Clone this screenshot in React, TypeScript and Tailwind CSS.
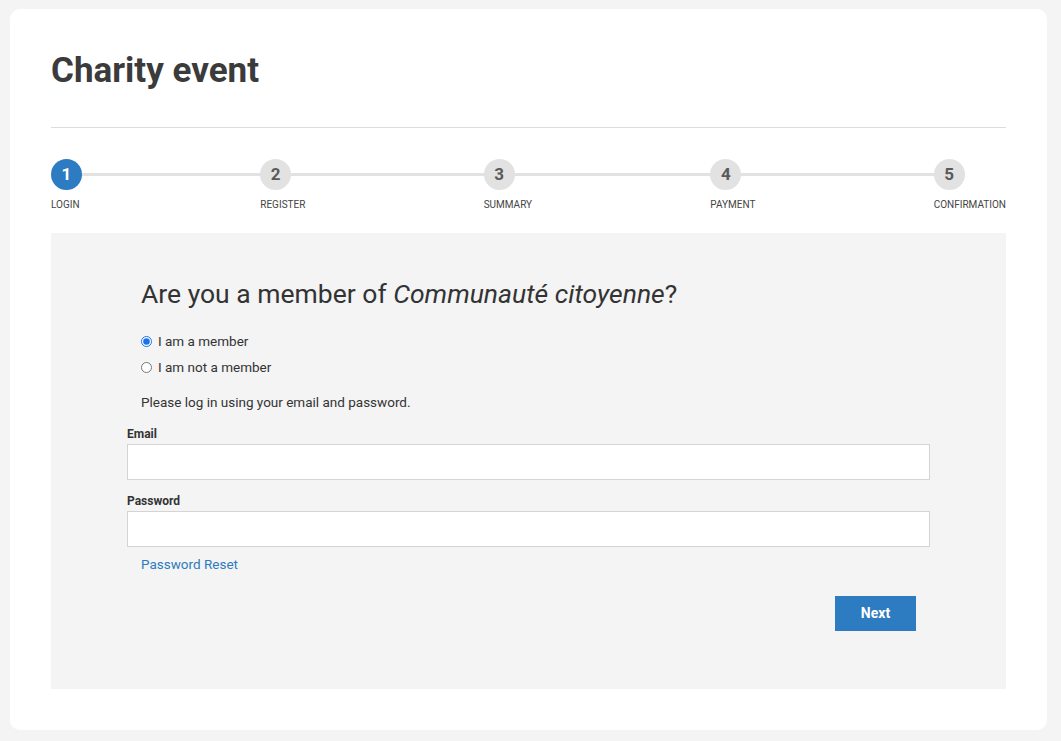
import React from "react";

const steps = [
  { n: 1, label: "Login", active: true },
  { n: 2, label: "Register" },
  { n: 3, label: "Summary" },
  { n: 4, label: "Payment" },
  { n: 5, label: "Confirmation" },
];

export default function App() {
  return (
    <div
      className="min-h-screen bg-[#f4f4f4] pt-[9px] pl-[10px] pr-[14px] pb-[11px]"
      style={{ fontFamily: "Roboto, 'Liberation Sans', sans-serif" }}
    >
      <div className="bg-white rounded-[10px] px-[41px] pt-[41px] pb-[41px]">
        <h1 className="text-[35px] leading-[42px] font-bold text-[#3b3b3b]">Charity event</h1>
        <div className="mt-[35px] border-t border-[#dddddd]" />

        <div className="relative mt-[31px] flex justify-between">
          <div className="absolute left-[15px] right-[59px] top-[14px] h-[3px] bg-[#e2e2e2]" />
          {steps.map((s) => (
            <div key={s.n} className="relative flex flex-col items-start">
              <div
                className={
                  s.active
                    ? "w-[31px] h-[31px] rounded-full bg-[#2d7bc0] text-white flex items-center justify-center text-[17px] font-bold"
                    : "w-[31px] h-[31px] rounded-full bg-[#e2e2e2] text-[#5a5a5a] flex items-center justify-center text-[17px] font-bold"
                }
              >
                {s.n}
              </div>
              <div className="mt-[9px] text-[10px] leading-[12px] uppercase text-[#444]">{s.label}</div>
            </div>
          ))}
        </div>

        <div className="mt-[22px] bg-[#f4f4f4] px-[76px] pt-[46px] pb-[58px] text-[#333]">
          <h2 className="pl-[14px] text-[26.5px] leading-[30px] font-normal text-[#333]">
            Are you a member of <em className="italic">Communauté citoyenne</em>?
          </h2>

          <div className="pl-[14px] mt-[22px] flex flex-col gap-[6px] text-[13.5px] leading-[20px]">
            <label className="flex items-center gap-[6px]">
              <input type="radio" name="member" defaultChecked className="m-0 w-[11px] h-[11px] accent-[#1a73e8]" />
              <span>I am a member</span>
            </label>
            <label className="flex items-center gap-[6px]">
              <input type="radio" name="member" className="m-0 w-[11px] h-[11px]" />
              <span>I am not a member</span>
            </label>
          </div>

          <p className="pl-[14px] mt-[15px] text-[13.5px] leading-[20px]">Please log in using your email and password.</p>

          <div className="mt-[14px]">
            <div className="text-[12px] leading-[16px] font-bold text-[#333]">Email</div>
            <input type="text" className="mt-[2px] block w-full h-[36px] bg-white border border-[#d4d4d4] outline-none" />
          </div>

          <div className="mt-[13px]">
            <div className="text-[12px] leading-[16px] font-bold text-[#333]">Password</div>
            <input type="password" className="mt-[2px] block w-full h-[36px] bg-white border border-[#d4d4d4] outline-none" />
          </div>

          <div className="pl-[14px] mt-[7px] text-[13.5px] leading-[20px]">
            <a href="#" className="text-[#2d7bc0]">Password Reset</a>
          </div>

          <div className="mt-[22px] flex justify-end pr-[14px]">
            <button className="w-[81px] h-[35px] bg-[#2d7bc0] text-white text-[14px] font-bold">Next</button>
          </div>
        </div>
      </div>
    </div>
  );
}
